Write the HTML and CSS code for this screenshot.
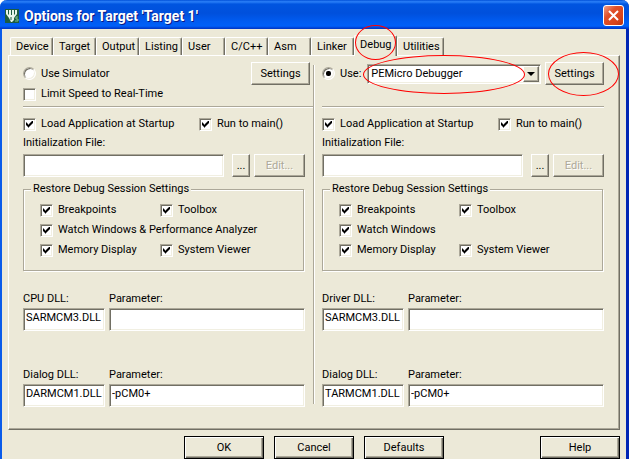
FILE: index.html
```html
<!DOCTYPE html>
<html lang="en">
<head>
    <meta charset="UTF-8">
    <meta name="viewport" content="width=device-width, initial-scale=1.0">
    <title>Options for Target 'Target 1'</title>
    <link rel="stylesheet" href="styles.css">
</head>
<body>
<div class="window">
    <header class="titlebar">
        <svg class="app-icon" width="14" height="14" viewBox="0 0 14 14">
            <rect width="14" height="14" fill="#1d5c40"/>
            <path d="M1 1h2v4l1 1V1h2v5h1V1h2v5l1-1V1h2v4L9 9v2l-2 2H6L4 9 1 5z" fill="#e8f5ea"/>
            <path d="M6 8v3" stroke="#1d5c40"/>
            <path d="M13 8h-2v2h2v2h-3" fill="none" stroke="#7dbd8c"/>
        </svg>
        <h1>Options for Target 'Target 1'</h1>
        <button class="close" aria-label="Close">
            <svg width="13" height="13" viewBox="0 0 13 13"><path d="M2 2l9 9M11 2l-9 9" stroke="#fff" stroke-width="2"/></svg>
        </button>
    </header>

    <main class="content">
        <nav class="tabs">
            <button class="tab">Device</button>
            <button class="tab">Target</button>
            <button class="tab">Output</button>
            <button class="tab">Listing</button>
            <button class="tab">User</button>
            <button class="tab">C/C++</button>
            <button class="tab">Asm</button>
            <button class="tab">Linker</button>
            <button class="tab active marked">Debug</button>
            <button class="tab">Utilities</button>
        </nav>

        <div class="panel">
            <!-- simulator -->
            <section class="column left">
                <div class="top">
                    <div class="row driver">
                        <label><input type="radio" name="driver">Use Simulator</label>
                        <button class="btn settings">Settings</button>
                    </div>
                    <label><input type="checkbox">Limit Speed to Real-Time</label>
                </div>
                <div class="row startup">
                    <label><input type="checkbox" checked>Load Application at Startup</label>
                    <label><input type="checkbox" checked>Run to main()</label>
                </div>
                <label class="caption" for="initSim">Initialization File:</label>
                <div class="row file">
                    <input type="text" id="initSim">
                    <button class="btn browse">...</button>
                    <button class="btn edit" disabled>Edit...</button>
                </div>
                <fieldset>
                    <legend>Restore Debug Session Settings</legend>
                    <label><input type="checkbox" checked>Breakpoints</label>
                    <label><input type="checkbox" checked>Toolbox</label>
                    <label class="wide"><input type="checkbox" checked>Watch Windows &amp; Performance Analyzer</label>
                    <label><input type="checkbox" checked>Memory Display</label>
                    <label><input type="checkbox" checked>System Viewer</label>
                </fieldset>
                <div class="dll">
                    <label for="cpuDll">CPU DLL:</label>
                    <label for="cpuParam">Parameter:</label>
                    <input type="text" id="cpuDll" value="SARMCM3.DLL">
                    <input type="text" id="cpuParam">
                </div>
                <div class="dll">
                    <label for="simDialogDll">Dialog DLL:</label>
                    <label for="simDialogParam">Parameter:</label>
                    <input type="text" id="simDialogDll" value="DARMCM1.DLL">
                    <input type="text" id="simDialogParam" value="-pCM0+">
                </div>
            </section>

            <div class="divider"></div>

            <!-- hardware debugger -->
            <section class="column right">
                <div class="top">
                    <div class="row driver">
                        <label><input type="radio" name="driver" checked>Use:</label>
                        <div class="combo marked">
                            <select aria-label="Debugger">
                                <option>PEMicro Debugger</option>
                            </select>
                            <span class="arrow"></span>
                        </div>
                        <button class="btn settings marked">Settings</button>
                    </div>
                </div>
                <div class="row startup">
                    <label><input type="checkbox" checked>Load Application at Startup</label>
                    <label><input type="checkbox" checked>Run to main()</label>
                </div>
                <label class="caption" for="initHw">Initialization File:</label>
                <div class="row file">
                    <input type="text" id="initHw">
                    <button class="btn browse">...</button>
                    <button class="btn edit" disabled>Edit...</button>
                </div>
                <fieldset>
                    <legend>Restore Debug Session Settings</legend>
                    <label><input type="checkbox" checked>Breakpoints</label>
                    <label><input type="checkbox" checked>Toolbox</label>
                    <label class="wide"><input type="checkbox" checked>Watch Windows</label>
                    <label><input type="checkbox" checked>Memory Display</label>
                    <label><input type="checkbox" checked>System Viewer</label>
                </fieldset>
                <div class="dll">
                    <label for="driverDll">Driver DLL:</label>
                    <label for="driverParam">Parameter:</label>
                    <input type="text" id="driverDll" value="SARMCM3.DLL">
                    <input type="text" id="driverParam">
                </div>
                <div class="dll">
                    <label for="hwDialogDll">Dialog DLL:</label>
                    <label for="hwDialogParam">Parameter:</label>
                    <input type="text" id="hwDialogDll" value="TARMCM1.DLL">
                    <input type="text" id="hwDialogParam" value="-pCM0+">
                </div>
            </section>
        </div>

        <footer class="buttons">
            <button class="btn">OK</button>
            <button class="btn">Cancel</button>
            <button class="btn">Defaults</button>
            <button class="btn help">Help</button>
        </footer>
    </main>
</div>
</body>
</html>
```
FILE: styles.css
```css
* {
    box-sizing: border-box;
}
body {
    margin: 0;
    background-color: #fff;
    font-family: Roboto, Arial, sans-serif;
    font-size: 11px;
    line-height: 14px;
    color: #000;
}
button, input, select {
    font: inherit;
    color: inherit;
    margin: 0;
}
.window {
    min-height: 100vh;
    border-left: 2px solid #0a5bea;
    border-right: 3px solid #0025b4;
    border-radius: 7px 7px 0 0;
    background-color: #ece9d8;
}

/* title bar */
.titlebar {
    display: flex;
    align-items: center;
    height: 29px;
    margin: 0 -3px 0 -2px;
    padding: 2px 5px 0 5px;
    border-radius: 7px 7px 0 0;
    background: linear-gradient(#0050d8, #2b80f8 6%, #0055e0 14%, #0050dc 45%, #005cf2 75%, #0060f8 90%, #003dd0 97%, #0038c0);
}
.titlebar h1 {
    flex: 1;
    margin: 0 0 0 5px;
    font-size: 14px;
    line-height: 18px;
    color: #fff;
    text-shadow: 1px 1px #0a1883;
}
.close {
    display: flex;
    align-items: center;
    justify-content: center;
    width: 21px;
    height: 21px;
    padding: 0;
    border: 1px solid #fff;
    border-radius: 3px;
    background: linear-gradient(135deg, #f0a088, #e0502a 35%, #d8431a 75%, #b83410);
}

/* tabs */
.content {
    padding: 6px 6px 0 6px;
}
.tabs {
    display: flex;
    align-items: flex-end;
    padding-left: 2px;
    height: 20px;
}
.tab {
    position: relative;
    min-width: 43px;
    height: 18px;
    padding: 0 3px 0 5px;
    border: 1px solid #fff;
    border-right-color: #716f64;
    border-bottom: 0;
    border-radius: 2px 2px 0 0;
    box-shadow: inset -1px 0 #aca899;
    background-color: #ece9d8;
    text-align: left;
}
.tab.active {
    z-index: 1;
    height: 21px;
    margin-bottom: -1px;
    padding-bottom: 3px;
}
.panel {
    display: flex;
    padding: 6px 15px 22px 14px;
    border: 1px solid #fff;
    border-right-color: #716f64;
    border-bottom-color: #716f64;
    box-shadow: inset -1px -1px #aca899;
}
.divider {
    width: 2px;
    margin: 3px 7px 3px 8px;
    border-left: 1px solid #aca899;
    border-right: 1px solid #fff;
}
.column {
    flex: 1;
    min-width: 0;
}
.row {
    display: flex;
    align-items: center;
}
label {
    display: flex;
    align-items: center;
    white-space: nowrap;
}

/* controls */
input[type="checkbox"],
input[type="radio"] {
    appearance: none;
    position: relative;
    flex: none;
    width: 13px;
    height: 13px;
    margin-right: 5px;
    border: 1px solid #aca899;
    border-right-color: #fff;
    border-bottom-color: #fff;
    box-shadow: inset 1px 1px #716f64, inset -1px -1px #f1efe2;
    background-color: #fff;
}
input[type="radio"] {
    border-radius: 50%;
}
input[type="checkbox"]:checked::before {
    content: "";
    position: absolute;
    left: 2px;
    top: 2px;
    width: 7px;
    height: 7px;
    background-color: #000;
    clip-path: polygon(0 2px, 1px 2px, 1px 3px, 2px 3px, 2px 4px, 3px 4px, 3px 3px, 4px 3px, 4px 2px, 5px 2px, 5px 1px, 6px 1px, 6px 0, 7px 0, 7px 3px, 6px 3px, 6px 4px, 5px 4px, 5px 5px, 4px 5px, 4px 6px, 3px 6px, 3px 7px, 2px 7px, 2px 6px, 1px 6px, 1px 5px, 0 5px);
}
input[type="radio"]:checked::before {
    content: "";
    position: absolute;
    left: 3px;
    top: 3px;
    width: 5px;
    height: 5px;
    border-radius: 2px;
    background-color: #000;
}
input[type="text"],
select {
    width: 100%;
    min-width: 0;
    height: 23px;
    padding: 0 1px 4px 2px;
    border: 1px solid #aca899;
    border-right-color: #fff;
    border-bottom-color: #fff;
    border-radius: 0;
    box-shadow: inset 1px 1px #716f64, inset -1px -1px #f1efe2;
    background-color: #fff;
}
.btn {
    position: relative;
    flex: none;
    height: 23px;
    padding: 0;
    border: 1px solid #fff;
    border-right-color: #716f64;
    border-bottom-color: #716f64;
    box-shadow: inset -1px -1px #aca899;
    background-color: #ece9d8;
}
.btn:disabled {
    color: #aca899;
    text-shadow: 1px 1px #fff;
}

/* driver rows */
.top {
    height: 45px;
    border-bottom: 1px solid #aca899;
    box-shadow: 0 1px #fff;
}
.left .top {
    margin-right: -8px;
    padding-right: 3px;
}
.driver {
    justify-content: space-between;
}
.driver + label {
    margin-top: 2px;
}
.settings {
    width: 59px;
}
.combo {
    position: relative;
    flex: 1;
    margin: 0 4px 0 6px;
}
select {
    appearance: none;
    display: block;
    height: 20px;
    padding: 0 20px 0 3px;
}
.arrow {
    position: absolute;
    top: 2px;
    right: 2px;
    width: 16px;
    height: 16px;
    border: 1px solid #fff;
    border-right-color: #716f64;
    border-bottom-color: #716f64;
    box-shadow: inset -1px -1px #aca899;
    background-color: #ece9d8;
    pointer-events: none;
}
.arrow::before {
    content: "";
    position: absolute;
    left: 3px;
    top: 5px;
    border: 4px solid transparent;
    border-top-color: #000;
    border-bottom: 0;
}

/* startup and init file */
.startup {
    margin-top: 10px;
}
.startup label:first-child {
    width: 176px;
}
.caption {
    margin-top: 5px;
}
.file {
    margin-top: 4px;
}
.file input[type="text"] {
    flex: 1;
}
.browse {
    width: 18px;
    margin: 0 4px 0 8px;
}
.edit {
    width: 51px;
}

/* restore settings group */
fieldset {
    display: grid;
    grid-template-columns: 120px 1fr;
    row-gap: 6px;
    min-width: 0;
    margin: 5px 1px 0 0;
    padding: 7px 0 13px 16px;
    border: 1px solid #aca899;
    box-shadow: 1px 1px #fff, inset 1px 1px #fff;
}
legend {
    margin-left: -9px;
    padding: 0 2px;
    background-color: #ece9d8;
}
.wide {
    grid-column: 1 / 3;
}

/* dll fields */
.dll {
    display: grid;
    grid-template-columns: 82px 1fr;
    gap: 2px 4px;
    margin-top: 21px;
}
.dll + .dll {
    margin-top: 37px;
}

/* bottom buttons */
.buttons {
    display: flex;
    gap: 10px;
    margin-top: 6px;
    padding-left: 176px;
}
.buttons .btn {
    width: 80px;
    border-color: #000;
    box-shadow: inset 1px 1px #fff, inset -1px -1px #716f64, inset -2px -2px #aca899;
}
.buttons .help {
    margin-left: auto;
}

/* red rings */
.marked::after {
    content: "";
    position: absolute;
    border: 1px solid #f00;
    border-radius: 50%;
    pointer-events: none;
}
.tab.marked::after {
    left: 0;
    right: 0;
    top: -11px;
    height: 33px;
}
.combo.marked::after {
    left: -4px;
    right: 16px;
    top: -9px;
    height: 37px;
}
.settings.marked::after {
    left: 2px;
    right: -16px;
    top: -11px;
    height: 42px;
}
```
